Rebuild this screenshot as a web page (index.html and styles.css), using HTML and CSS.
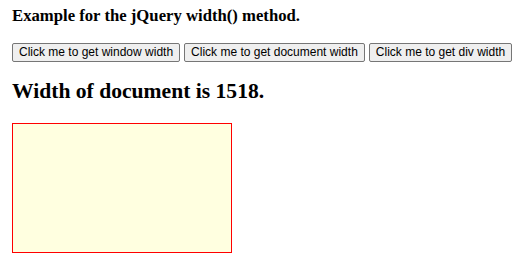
FILE: index.html
```html
<!DOCTYPE html>
<html>
<head>
<meta charset="utf-8">
<link rel="stylesheet" href="styles.css">
</head>
<body>
<div class="page">
<p class="title">Example for the jQuery width() method.</p>
<div class="buttons"><button>Click me to get window width</button><button>Click me to get document width</button><button>Click me to get div width</button></div>
<h2 class="result">Width of document is 1518.</h2>
<div class="box"></div>
</div>
</body>
</html>
```
FILE: styles.css
```css
body {
  margin: 0;
  font-family: "Liberation Serif", "Times New Roman", serif;
  color: #000;
  background: #fff;
}
.page {
  padding: 6px 12px 0;
}
.title {
  font-weight: bold;
  font-size: 16.7px;
  line-height: 19px;
  margin: 0 0 18px;
}
.buttons {
  display: flex;
  gap: 4px;
}
.buttons button {
  flex: none;
  white-space: nowrap;
  font-family: "Liberation Sans", Arial, sans-serif;
  font-size: 12px;
  line-height: 13px;
  height: 19px;
  padding: 0 6px;
  margin: 0;
  background: #efefef;
  border: 1px solid #767676;
  border-radius: 2px;
  color: #000;
}
.result {
  font-size: 21.6px;
  line-height: 25px;
  margin: 17px 0 19px;
}
.box {
  width: 218px;
  height: 128px;
  background: #ffffe0;
  border: 1px solid red;
}
```
